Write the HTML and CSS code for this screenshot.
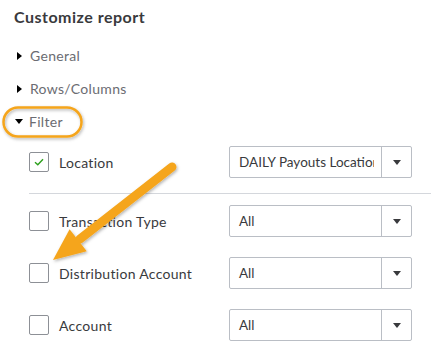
FILE: index.html
```
<!DOCTYPE html>
<html lang="en">
<head>
    <meta charset="UTF-8">
    <title>Customize report</title>
    <link rel="stylesheet" href="styles.css">
</head>
<body>
    <div class="panel">
        <h1 class="panel-title">Customize report</h1>

        <div class="section"><span class="caret-right"></span>General</div>
        <div class="section"><span class="caret-right"></span>Rows/Columns</div>
        <div class="section open"><span class="caret-down"></span>Filter</div>

        <div class="filters">
            <div class="filter-row">
                <div class="filter-label">
                    <span class="checkbox checked">
                        <svg width="10" height="8" viewBox="0 0 10 8"><path d="M1 4.2 L3.8 6.8 L9 1.2" fill="none" stroke="#2ca01c" stroke-width="1.4"/></svg>
                    </span>
                    Location
                </div>
                <div class="select">
                    <span class="select-value">DAILY Payouts Location</span>
                    <span class="select-btn"><span class="caret-small"></span></span>
                </div>
            </div>

            <div class="divider"></div>

            <div class="filter-row">
                <div class="filter-label"><span class="checkbox"></span>Transaction Type</div>
                <div class="select">
                    <span class="select-value">All</span>
                    <span class="select-btn"><span class="caret-small"></span></span>
                </div>
            </div>

            <div class="filter-row">
                <div class="filter-label"><span class="checkbox"></span>Distribution Account</div>
                <div class="select">
                    <span class="select-value">All</span>
                    <span class="select-btn"><span class="caret-small"></span></span>
                </div>
            </div>

            <div class="filter-row">
                <div class="filter-label"><span class="checkbox"></span>Account</div>
                <div class="select">
                    <span class="select-value">All</span>
                    <span class="select-btn"><span class="caret-small"></span></span>
                </div>
            </div>
        </div>
    </div>

    <!-- annotation drawn over the panel -->
    <svg class="annotation" width="431" height="351" viewBox="0 0 431 351">
        <defs>
            <filter id="shade" x="-20%" y="-20%" width="140%" height="140%">
                <feDropShadow dx="1" dy="1.5" stdDeviation="1.5" flood-color="#000" flood-opacity="0.3"/>
            </filter>
        </defs>
        <rect x="3.5" y="107.5" width="78" height="29" rx="14.5" fill="none" stroke="#f5a51c" stroke-width="2.5" filter="url(#shade)"/>
        <g filter="url(#shade)" fill="#f5a51c">
            <line x1="172" y1="167" x2="80" y2="239" stroke="#f5a51c" stroke-width="9" stroke-linecap="round"/>
            <polygon points="86.8,251.3 53,260 69.6,229.3"/>
        </g>
    </svg>
</body>
</html>
```

FILE: styles.css
```
body {
    margin: 0;
    font-family: Lato, "Open Sans", sans-serif;
    color: #393a3d;
    background: #fff;
    width: 431px;
    height: 351px;
    overflow: hidden;
    position: relative;
}

.panel {
    padding: 0 0 0 14px;
}

.panel-title {
    margin: 0;
    padding-top: 7px;
    height: 39px;
    box-sizing: border-box;
    font-size: 16px;
    font-weight: bold;
    letter-spacing: 0.5px;
    line-height: 20px;
    color: #393a3d;
}

/* Sections */
.section {
    height: 33px;
    display: flex;
    align-items: center;
    font-size: 14px;
    letter-spacing: 0.3px;
    color: #6b6c72;
}

.caret-right {
    width: 0;
    height: 0;
    border-top: 4px solid transparent;
    border-bottom: 4px solid transparent;
    border-left: 5px solid #000;
    margin: 0 8px 0 3px;
}

.caret-down {
    width: 0;
    height: 0;
    border-left: 4px solid transparent;
    border-right: 4px solid transparent;
    border-top: 5px solid #000;
    margin: 0 6px 0 1px;
}

/* Filters */
.filters {
    margin-top: 8px;
    padding-left: 15px;
    display: flex;
    flex-direction: column;
    gap: 20px;
}

.filter-row {
    display: flex;
    align-items: center;
    height: 32px;
    padding-right: 19px;
}

.filter-label {
    flex: 1;
    display: flex;
    align-items: center;
    gap: 10px;
    font-size: 14px;
    letter-spacing: 0.3px;
    color: #393a3d;
}

.checkbox {
    width: 18px;
    height: 18px;
    border: 1px solid #8d9096;
    border-radius: 2px;
    display: flex;
    align-items: center;
    justify-content: center;
}

.divider {
    height: 1px;
    background-color: #d4d7dc;
    margin: -5px 0 -9px 0;
}

.select {
    width: 183px;
    height: 32px;
    box-sizing: border-box;
    border: 1px solid #babec5;
    border-radius: 2px;
    display: flex;
    align-items: center;
}

.select-value {
    flex: 1;
    min-width: 0;
    margin-right: 7px;
    padding-left: 9px;
    font-size: 13.5px;
    white-space: nowrap;
    overflow: hidden;
}

.select-btn {
    width: 29px;
    height: 100%;
    flex-shrink: 0;
    border-left: 1px solid #babec5;
    display: flex;
    align-items: center;
    justify-content: center;
}

.caret-small {
    width: 0;
    height: 0;
    border-left: 4px solid transparent;
    border-right: 4px solid transparent;
    border-top: 5px solid #393a3d;
}

.annotation {
    position: absolute;
    left: 0;
    top: 0;
    pointer-events: none;
}
```
